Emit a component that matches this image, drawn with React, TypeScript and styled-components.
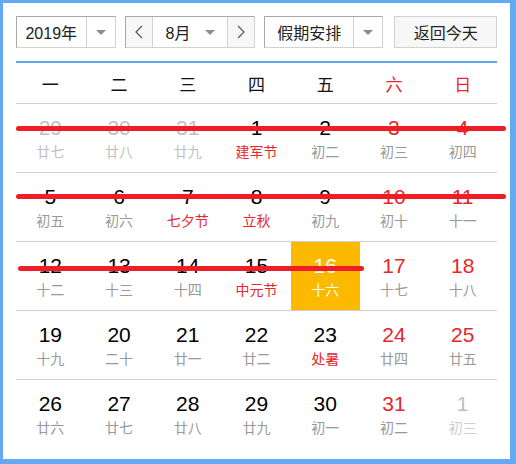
import React from 'react';
import styled, { createGlobalStyle } from 'styled-components';

const Global = createGlobalStyle`
  html, body { margin: 0; padding: 0; background: #fff; }
  * { box-sizing: border-box; }
`;

const Frame = styled.div`
  width: 516px;
  height: 464px;
  border-style: solid;
  border-color: #62aaf4;
  border-width: 3px 6px 5px 3px;
  padding: 13px 13px 0 13px;
  font-family: "Liberation Sans", "Noto Sans CJK SC", sans-serif;
  color: #000;
`;

const Toolbar = styled.div`
  display: flex;
  align-items: center;
  height: 32px;
`;

const Select = styled.div<{ $w: number; $ml?: number }>`
  display: flex;
  width: ${p => p.$w}px;
  height: 32px;
  margin-left: ${p => p.$ml ?? 0}px;
  border: 1px solid;
  border-color: #a9a9a9 #d2d2d2 #d2d2d2 #a9a9a9;
  background: #fff;
`;

const SelectText = styled.div<{ $cjk?: boolean }>`
  flex: 1;
  display: flex;
  align-items: center;
  justify-content: center;
  font-size: 16px;
  color: #222;
  ${p => (p.$cjk ? 'font-family: "Noto Sans CJK SC", sans-serif;' : '')}
`;

const Drop = styled.div`
  width: 29px;
  display: flex;
  align-items: center;
  justify-content: center;
  border-left: 1px solid #d2d2d2;
`;

const Caret = styled.span`
  width: 0;
  height: 0;
  border-left: 5px solid transparent;
  border-right: 5px solid transparent;
  border-top: 5px solid #8c8c8c;
`;

const MonthText = styled(SelectText)`
  justify-content: space-between;
  padding: 0 12px 0 13px;
`;

const Nav = styled.div<{ $side: 'l' | 'r' }>`
  width: 27px;
  display: flex;
  align-items: center;
  justify-content: center;
  background: #f7f7f7;
  border-${p => (p.$side === 'l' ? 'right' : 'left')}: 1px solid #d2d2d2;
`;

const TodayBtn = styled.div`
  margin-left: 11px;
  width: 103px;
  height: 32px;
  display: flex;
  align-items: center;
  justify-content: center;
  background: #f7f7f7;
  border: 1px solid #d2d2d2;
  font-family: "Noto Sans CJK SC", sans-serif;
  font-size: 16px;
  color: #222;
`;

const Table = styled.div`
  width: 481px;
  margin-top: 13px;
  border-top: 2px solid #5da5ee;
`;

const Grid = styled.div<{ $last?: boolean }>`
  position: relative;
  display: grid;
  grid-template-columns: repeat(7, 1fr);
  border-bottom: ${p => (p.$last ? 'none' : '1px solid #cfcfcf')};
`;

const Head = styled.div<{ $red?: boolean }>`
  height: 40px;
  display: flex;
  align-items: center;
  justify-content: center;
  font-family: "Noto Sans CJK SC", sans-serif;
  font-size: 17px;
  color: ${p => (p.$red ? '#e8262c' : '#111')};
`;

const Cell = styled.div<{ $sel?: boolean }>`
  height: 68px;
  display: flex;
  flex-direction: column;
  align-items: center;
  padding-top: 10px;
  background: ${p => (p.$sel ? '#fdb900' : 'transparent')};
`;

const Num = styled.div<{ $c: string }>`
  font-size: 21px;
  line-height: 28px;
  color: ${p => p.$c};
`;

const Lunar = styled.div<{ $c: string }>`
  font-family: "Noto Sans CJK SC", sans-serif;
  font-size: 14px;
  line-height: 20px;
  margin-top: -1px;
  color: ${p => p.$c};
`;

const Strike = styled.div<{ $top: number; $left: number; $width: number }>`
  position: absolute;
  top: ${p => p.$top}px;
  left: ${p => p.$left}px;
  width: ${p => p.$width}px;
  height: 5px;
  border-radius: 3px;
  background: #ee1d26;
`;

const Chevron = ({ dir }: { dir: 'l' | 'r' }) => (
  <svg width="8" height="14" viewBox="0 0 8 14">
    <polyline
      points={dir === 'l' ? '7,1 1,7 7,13' : '1,1 7,7 1,13'}
      fill="none"
      stroke="#555"
      strokeWidth="1.2"
    />
  </svg>
);

type Day = { n: number; l: string; kind?: 'gray' | 'red'; fest?: boolean; sel?: boolean; faint?: boolean };

const BLACK = '#000';
const RED = '#e8262c';
const GRAY = '#999';
const LIGHT = '#bfbfbf';

const weeks: Day[][] = [
  [
    { n: 29, l: '廿七', kind: 'gray' },
    { n: 30, l: '廿八', kind: 'gray' },
    { n: 31, l: '廿九', kind: 'gray' },
    { n: 1, l: '建军节', fest: true },
    { n: 2, l: '初二' },
    { n: 3, l: '初三', kind: 'red' },
    { n: 4, l: '初四', kind: 'red' },
  ],
  [
    { n: 5, l: '初五' },
    { n: 6, l: '初六' },
    { n: 7, l: '七夕节', fest: true },
    { n: 8, l: '立秋', fest: true },
    { n: 9, l: '初九' },
    { n: 10, l: '初十', kind: 'red' },
    { n: 11, l: '十一', kind: 'red' },
  ],
  [
    { n: 12, l: '十二' },
    { n: 13, l: '十三' },
    { n: 14, l: '十四' },
    { n: 15, l: '中元节', fest: true },
    { n: 16, l: '十六', sel: true },
    { n: 17, l: '十七', kind: 'red' },
    { n: 18, l: '十八', kind: 'red' },
  ],
  [
    { n: 19, l: '十九' },
    { n: 20, l: '二十' },
    { n: 21, l: '廿一' },
    { n: 22, l: '廿二' },
    { n: 23, l: '处暑', fest: true },
    { n: 24, l: '廿四', kind: 'red' },
    { n: 25, l: '廿五', kind: 'red' },
  ],
  [
    { n: 26, l: '廿六' },
    { n: 27, l: '廿七' },
    { n: 28, l: '廿八' },
    { n: 29, l: '廿九' },
    { n: 30, l: '初一' },
    { n: 31, l: '初二', kind: 'red' },
    { n: 1, l: '初三', kind: 'gray', faint: true },
  ],
];

// hand-drawn red strike marks over the first three weeks
const strikes: Record<number, { top: number; left: number; width: number }> = {
  0: { top: 22, left: 0, width: 490 },
  1: { top: 21, left: 0, width: 490 },
  2: { top: 24, left: 2, width: 346 },
};

const numColor = (d: Day) =>
  d.sel ? '#fff' : d.kind === 'gray' ? LIGHT : d.kind === 'red' ? RED : BLACK;

const lunarColor = (d: Day) =>
  d.sel ? '#fff' : d.fest ? RED : d.faint ? '#cdcdcd' : d.kind === 'gray' ? LIGHT : GRAY;

const heads = ['一', '二', '三', '四', '五', '六', '日'];

export default function App() {
  return (
    <>
      <Global />
      <Frame>
        <Toolbar>
          <Select $w={100}>
            <SelectText>2019年</SelectText>
            <Drop>
              <Caret />
            </Drop>
          </Select>
          <Select $w={131} $ml={9}>
            <Nav $side="l">
              <Chevron dir="l" />
            </Nav>
            <MonthText>
              <span>8月</span>
              <Caret />
            </MonthText>
            <Nav $side="r">
              <Chevron dir="r" />
            </Nav>
          </Select>
          <Select $w={120} $ml={9}>
            <SelectText $cjk>假期安排</SelectText>
            <Drop>
              <Caret />
            </Drop>
          </Select>
          <TodayBtn>返回今天</TodayBtn>
        </Toolbar>
        <Table>
          <Grid>
            {heads.map((h, i) => (
              <Head key={h} $red={i > 4}>
                {h}
              </Head>
            ))}
          </Grid>
          {weeks.map((w, wi) => (
            <Grid key={wi} $last={wi === weeks.length - 1}>
              {w.map((d, di) => (
                <Cell key={di} $sel={d.sel}>
                  <Num $c={numColor(d)}>{d.n}</Num>
                  <Lunar $c={lunarColor(d)}>{d.l}</Lunar>
                </Cell>
              ))}
              {strikes[wi] && (
                <Strike $top={strikes[wi].top} $left={strikes[wi].left} $width={strikes[wi].width} />
              )}
            </Grid>
          ))}
        </Table>
      </Frame>
    </>
  );
}
